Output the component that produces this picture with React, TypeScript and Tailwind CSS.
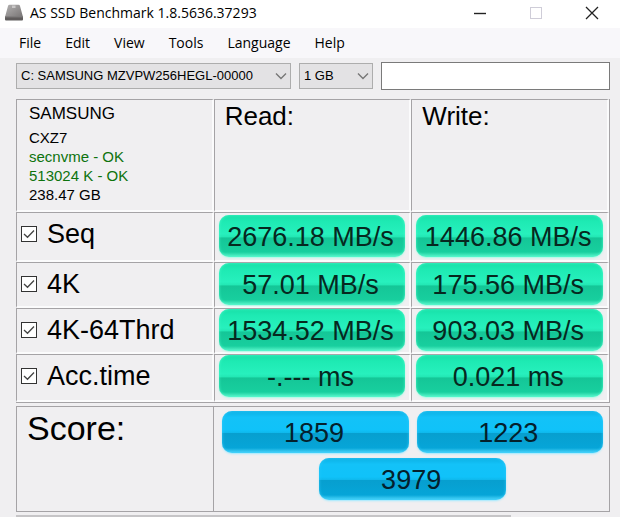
import { ReactNode } from "react";
import clsx from "clsx";

const menuItems = ["File", "Edit", "View", "Tools", "Language", "Help"];

const tests = [
  { name: "Seq", read: "2676.18 MB/s", write: "1446.86 MB/s" },
  { name: "4K", read: "57.01 MB/s", write: "175.56 MB/s" },
  { name: "4K-64Thrd", read: "1534.52 MB/s", write: "903.03 MB/s" },
  { name: "Acc.time", read: "-.--- ms", write: "0.021 ms" },
];

const rowHeights = ["h-[50px]", "h-[46px]", "h-[46px]", "h-[48px]"];

const DriveIcon = () => (
  <svg width="20" height="18" viewBox="0 0 20 18" aria-hidden="true">
    <defs>
      <linearGradient id="drive" x1="0" y1="0" x2="1" y2="1">
        <stop offset="0" stopColor="#b4b2b2" />
        <stop offset="1" stopColor="#777474" />
      </linearGradient>
    </defs>
    <path d="M4 2 Q4.3 0.8 5.5 0.8 H14.5 Q15.7 0.8 16 2 L19 13 H1 Z" fill="url(#drive)" />
    <path d="M8 1.5 H11.5 V4 H8 Z" fill="#c9c7c7" />
    <path d="M1 12.5 H19 V15.6 Q19 16.6 18 16.6 H2 Q1 16.6 1 15.6 Z" fill="#5f5c5c" />
    <path d="M1 12.5 H19 V13.3 H1 Z" fill="#8d8a8a" />
  </svg>
);

const TitleBar = () => (
  <header className="flex h-7 items-center justify-between bg-white pb-0.5 pl-1">
    <div className="flex items-center gap-1.5">
      <DriveIcon />
      <h1 className="font-['Open_Sans',sans-serif] text-[14px] leading-5">
        AS SSD Benchmark 1.8.5636.37293
      </h1>
    </div>
    <div className="flex">
      <button aria-label="Minimize" className="flex h-7 w-14 items-center justify-center">
        <svg width="14" height="14" viewBox="0 0 14 14">
          <path d="M1 7.5 H13" stroke="#222" strokeWidth="1.4" />
        </svg>
      </button>
      <button aria-label="Maximize" disabled className="flex h-7 w-14 items-center justify-center">
        <svg width="14" height="14" viewBox="0 0 14 14">
          <rect x="1.5" y="1.5" width="11" height="11" fill="none" stroke="#cfcdd8" />
        </svg>
      </button>
      <button aria-label="Close" className="flex h-7 w-14 items-center justify-center">
        <svg width="14" height="14" viewBox="0 0 14 14">
          <path d="M1 1 L13 13 M13 1 L1 13" stroke="#222" strokeWidth="1.3" />
        </svg>
      </button>
    </div>
  </header>
);

const Dropdown = ({ label, value, className }: { label: string; value: string; className: string }) => (
  <div className={clsx("relative", className)}>
    <select
      aria-label={label}
      className="h-[26px] w-full appearance-none border border-[#adadad] bg-[#e3e2e4] pl-1 pr-5 text-[13px] leading-6 text-black"
    >
      <option>{value}</option>
    </select>
    <svg
      width="12"
      height="8"
      viewBox="0 0 12 8"
      className="pointer-events-none absolute right-1 top-[9px]"
    >
      <path d="M1 1.5 L6 6.5 L11 1.5" fill="none" stroke="#777" strokeWidth="1.4" />
    </svg>
  </div>
);

const Pill = ({ color, className, children }: { color: "green" | "blue"; className?: string; children: ReactNode }) => (
  <div
    className={clsx(
      "h-[42px] rounded-[10px] pr-[3px] pt-0.5 text-center text-[27px] leading-10",
      color === "green" &&
        "bg-[linear-gradient(#17dfa8_0%,#1eeab3_15%,#27f0bd_45%,#22e6b3_53%,#14c697_54%,#18cf9e_88%,#5df5cd_100%)] text-[#06281f] shadow-[inset_0_0_3px_#4dfccb,0_1px_2px_#a8fbe4]",
      color === "blue" &&
        "bg-[linear-gradient(#0cb0e4_0%,#13c2f8_15%,#10c2f9_45%,#0eb8ec_52%,#079fcf_53%,#06a5d8_88%,#4fd6fb_100%)] text-[#04202c] shadow-[inset_0_0_3px_#35cdfb,0_1px_2px_#9fe9ff]",
      className
    )}
  >
    {children}
  </div>
);

const TestCheckbox = ({ name }: { name: string }) => (
  <label className="flex items-center gap-2.5 pl-1 pt-px text-[27px] leading-10">
    <span className="relative flex">
      <input
        type="checkbox"
        defaultChecked
        className="peer size-4 appearance-none border border-[#333] bg-white"
      />
      <svg
        width="16"
        height="16"
        viewBox="0 0 16 16"
        className="pointer-events-none absolute inset-0 hidden peer-checked:block"
      >
        <path d="M3 8 L6.5 11.3 L13 4.5" fill="none" stroke="#444" strokeWidth="1.3" />
      </svg>
    </span>
    {name}
  </label>
);

// every cell has a grey top/left edge and a white bottom/right one
const cell = "border-2 border-t border-l border-t-[#a5a3a6] border-l-[#a5a3a6] border-b-[#fbfbfc] border-r-[#fbfbfc] p-0 align-top font-normal text-left";

const Results = () => (
  <table className="w-full table-fixed border-separate border-spacing-0 border-b border-r border-[#a5a3a6]">
    <thead>
      <tr className="h-[113px]">
        <td className={cell}>
          <div className="pl-3 pt-0.5 text-[15px] leading-[19px]">
            <p className="mb-0.5 text-[17px] leading-6">SAMSUNG</p>
            <p>CXZ7</p>
            <p className="text-[#0d730d]">secnvme - OK</p>
            <p className="text-[#0d730d]">513024 K - OK</p>
            <p>238.47 GB</p>
          </div>
        </td>
        <th className={cell}>
          <p className="pl-2.5 text-[26px] leading-8">Read:</p>
        </th>
        <th className={cell}>
          <p className="pl-2.5 text-[26px] leading-8">Write:</p>
        </th>
      </tr>
    </thead>
    <tbody>
      {tests.map((test, i) => (
        <tr key={test.name} className={rowHeights[i]}>
          <th className={cell}>
            <TestCheckbox name={test.name} />
          </th>
          <td className={clsx(cell, "px-1", i === 0 && "pt-0.5")}>
            <Pill color="green">{test.read}</Pill>
          </td>
          <td className={clsx(cell, "px-1", i === 0 && "pt-0.5")}>
            <Pill color="green">{test.write}</Pill>
          </td>
        </tr>
      ))}
    </tbody>
  </table>
);

const Score = () => (
  <section className="grid grid-cols-3 border border-[#a5a3a6]">
    <h2 className="border-r border-[#a5a3a6] pl-2.5 text-[34px] leading-[42px]">Score:</h2>
    <div className="col-span-2 grid h-[104px] grid-cols-4 content-start gap-x-2 gap-y-[5px] pl-2 pr-1.5 pt-1">
      <Pill color="blue" className="col-span-2">1859</Pill>
      <Pill color="blue" className="col-span-2">1223</Pill>
      <Pill color="blue" className="col-span-2 col-start-2">3979</Pill>
    </div>
  </section>
);

const App = () => {
  return (
    <div className="min-h-screen bg-[#f0eff1] font-['Liberation_Sans',Arial,sans-serif] text-black">
      <TitleBar />
      <nav className="flex h-[30px] items-center gap-6 bg-[#f8f7fa] pl-[19px] font-['Open_Sans',sans-serif] text-[14px] leading-5">
        {menuItems.map((item) => (
          <button key={item}>{item}</button>
        ))}
      </nav>
      <main className="pl-4 pr-2.5 pt-1">
        <div className="flex items-center gap-2">
          <Dropdown label="Drive" value="C: SAMSUNG MZVPW256HEGL-00000" className="w-[275px]" />
          <Dropdown label="Test size" value="1 GB" className="w-[74px]" />
          <input
            aria-label="Comment"
            className="h-7 min-w-0 flex-1 border border-[#7a7a7a] bg-white px-1 text-[13px]"
          />
        </div>
        <div className="mt-[9px] flex flex-col gap-[3px]">
          <Results />
          <Score />
          <div className="h-0.5 w-5/6 bg-[#c6c5c7]" />
        </div>
      </main>
    </div>
  );
};

export default App;
